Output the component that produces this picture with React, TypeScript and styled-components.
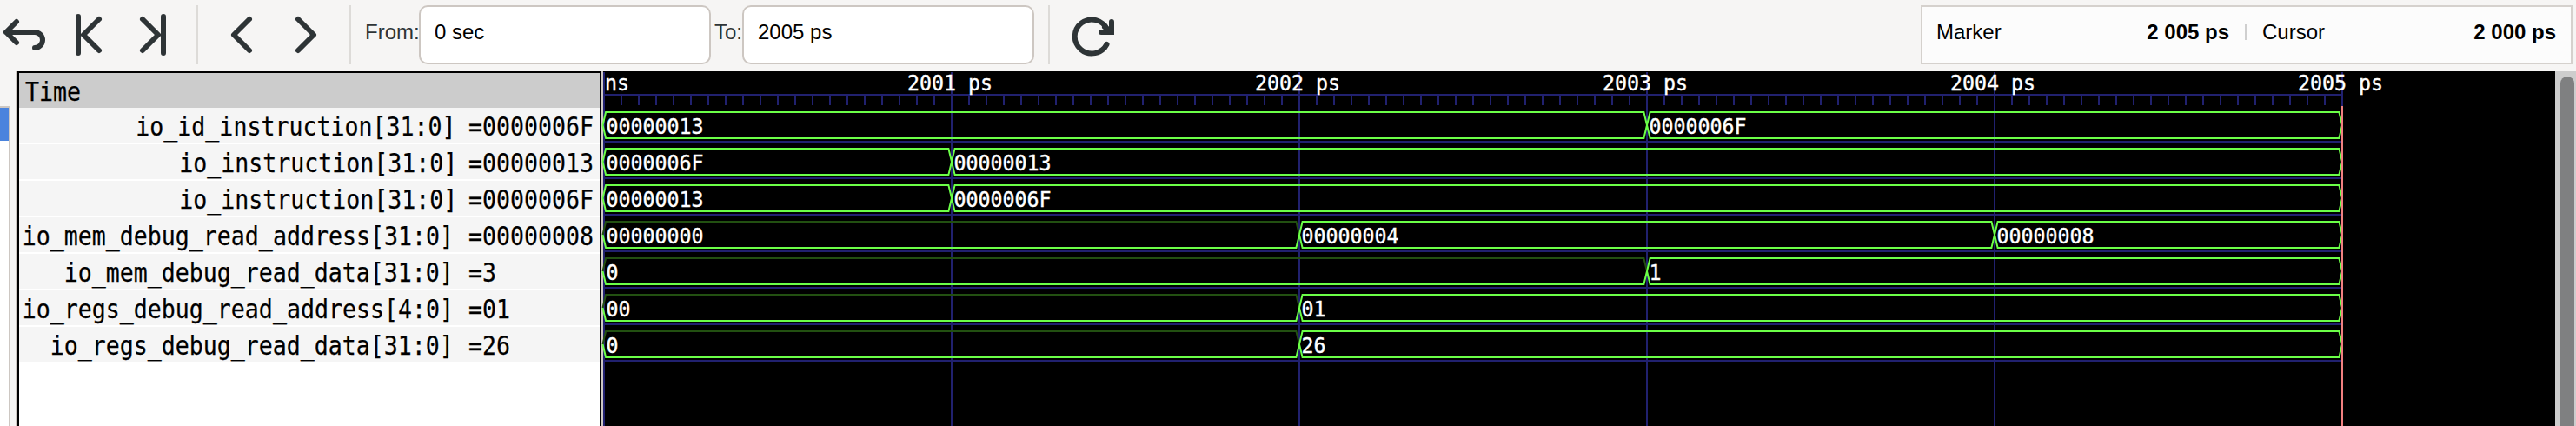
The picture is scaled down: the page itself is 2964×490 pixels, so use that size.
import React from "react";
import styled, { createGlobalStyle } from "styled-components";

const GlobalStyle = createGlobalStyle`
  * { box-sizing: border-box; }
  body { margin: 0; background: #f6f5f4; overflow: hidden; }
`;

const sans = `"Liberation Sans", Arial, sans-serif`;
const mono = `"DejaVu Sans Mono", "Liberation Mono", monospace`;

const Window = styled.div`
  display: flex;
  flex-direction: column;
  width: 2964px;
  height: 490px;
  background: #f6f5f4;
  font-family: ${sans};
  font-size: 24px;
  color: #000;
`;

const Toolbar = styled.header`
  display: flex;
  flex: none;
  height: 82px;
  padding: 6px 4px 8px 0;
`;

const IconButton = styled.button<{ $width: number }>`
  display: flex;
  flex: none;
  width: ${(p) => p.$width}px;
  height: 68px;
  padding: 0;
  border: 0;
  background: none;
`;

const Separator = styled.div`
  flex: none;
  width: 2px;
  height: 68px;
  background: #dddbd8;
`;

const FieldLabel = styled.label<{ $width: number; $indent: number }>`
  flex: none;
  width: ${(p) => p.$width}px;
  padding-left: ${(p) => p.$indent}px;
  line-height: 62px;
  white-space: nowrap;
  color: #2e3436;
`;

const Entry = styled.div`
  flex: none;
  width: 336px;
  height: 68px;
  padding-left: 16px;
  line-height: 58px;
  border: 2px solid #cdc7c2;
  border-radius: 10px;
  background: #fff;
`;

const Gap = styled.div<{ $width: number }>`
  flex: none;
  width: ${(p) => p.$width}px;
`;

const StatusBox = styled.div`
  display: flex;
  width: 750px;
  height: 68px;
  margin-left: auto;
  padding: 0 17px 0 16px;
  line-height: 58px;
  border: 2px solid #d5d1cd;
  background: #fcfcfc;
`;

const StatusItem = styled.div<{ $width: number }>`
  display: flex;
  justify-content: space-between;
  width: ${(p) => p.$width}px;
`;

const StatusDivider = styled.div`
  width: 2px;
  height: 18px;
  margin: 20px 18px 0 18px;
  background: #cfcfcf;
`;

const Main = styled.main`
  display: flex;
  flex: 1;
  min-height: 0;
`;

const TreeEdge = styled.aside`
  flex: none;
  width: 12px;
  margin: 40px 6px 0 0;
  border: solid #cdc7c2;
  border-width: 2px 2px 0 0;
  background: #fff;
`;

const TreeSelection = styled.div`
  height: 38px;
  background: #4a83dd;
`;

const SignalPane = styled.section`
  flex: none;
  width: 676px;
  border: solid #cdc7c2;
  border-width: 0 2px;
  background: #fff;
`;

const SignalFrame = styled.div`
  height: 100%;
  border: solid #000;
  border-width: 2px 2px 0;
  font-family: ${mono};
  font-size: 30px;
`;

const Condensed = styled.span`
  display: inline-block;
  transform: scaleX(0.886);
  transform-origin: 0 50%;
  white-space: pre;
  -webkit-text-stroke: 0.25px #000;
`;

const TimeHeader = styled.div`
  height: 40px;
  padding-left: 7px;
  line-height: 43px;
  background: #ccc;
`;

const SignalRow = styled.div`
  display: flex;
  height: 42px;
  line-height: 43px;
  border-bottom: 2px solid #fff;
  background: #f5f5f5;
`;

const SignalName = styled.div<{ $shift: number }>`
  flex: none;
  width: ${(p) => 502 + p.$shift}px;
  margin-right: ${(p) => 14.5 - p.$shift}px;
  display: flex;
  justify-content: flex-end;
  white-space: pre;

  ${Condensed} {
    flex: none;
    transform-origin: 100% 50%;
  }
`;

const WavePane = styled.section`
  flex: none;
  width: 2246px;
  height: 100%;
  background: #000;
`;

const Scrollbar = styled.div`
  display: flex;
  width: 24px;
  padding: 6px 2px 0 6px;
  background: #cdcdcd;
`;

const Thumb = styled.div`
  flex: 1;
  border-radius: 8px 8px 0 0;
  background: #7f8081;
`;

type IconProps = { x: number; w: number; children: React.ReactNode };

const Icon = ({ x, w, children }: IconProps) => (
  <svg
    width={w}
    height={68}
    viewBox={`${x} 6 ${w} 68`}
    fill="none"
    stroke="#2e3436"
    strokeWidth={6}
    strokeLinecap="round"
    strokeLinejoin="round"
  >
    {children}
  </svg>
);

type Segment = { at: number; value: string; low?: boolean };
type Signal = { name: string; value: string; shift: number; wave: Segment[] };

const signals: Signal[] = [
  {
    name: "io_id_instruction[31:0]",
    value: "0000006F",
    shift: 0,
    wave: [{ at: 0, value: "00000013" }, { at: 3, value: "0000006F" }],
  },
  {
    name: "io_instruction[31:0]",
    value: "00000013",
    shift: 2,
    wave: [{ at: 0, value: "0000006F" }, { at: 1, value: "00000013" }],
  },
  {
    name: "io_instruction[31:0]",
    value: "0000006F",
    shift: 2,
    wave: [{ at: 0, value: "00000013" }, { at: 1, value: "0000006F" }],
  },
  {
    name: "io_mem_debug_read_address[31:0]",
    value: "00000008",
    shift: -2,
    wave: [
      { at: 0, value: "00000000", low: true },
      { at: 2, value: "00000004" },
      { at: 4, value: "00000008" },
    ],
  },
  {
    name: "io_mem_debug_read_data[31:0]",
    value: "3",
    shift: -2,
    wave: [{ at: 0, value: "0", low: true }, { at: 3, value: "1" }],
  },
  {
    name: "io_regs_debug_read_address[4:0]",
    value: "01",
    shift: -2,
    wave: [{ at: 0, value: "00", low: true }, { at: 2, value: "01" }],
  },
  {
    name: "io_regs_debug_read_data[31:0]",
    value: "26",
    shift: -2,
    wave: [{ at: 0, value: "0", low: true }, { at: 2, value: "26" }],
  },
];

const STEP = 400;
const END = 5;
const GRID = "#21216f";
const GREEN = "#6bff47";
const DIM = "#225011";

const WaveText = ({ x, y, children }: { x: number; y: number; children: string }) => (
  <text
    x={x}
    y={y}
    fill="#fff"
    stroke="#fff"
    strokeWidth={0.4}
    fontFamily='"DejaVu Sans Mono", monospace'
    fontSize={25.5}
    textLength={children.length * 14}
    lengthAdjust="spacingAndGlyphs"
  >
    {children}
  </text>
);

const Wave = ({ segments, row }: { segments: Segment[]; row: number }) => {
  const top = 47 + row * 42;
  const mid = top + 15;
  const bottom = top + 30;
  return (
    <g fill="none" strokeWidth={2}>
      {segments.map((s, i) => {
        const last = i === segments.length - 1;
        const x0 = s.at * STEP + (s.at ? 1 : -0.5);
        const x1 = (last ? END : segments[i + 1].at) * STEP + 1;
        const half = (y: number) =>
          `M${x0} ${mid}L${x0 + 3.6} ${y}H${x1 - 3.6}L${x1} ${mid}`;
        return (
          <g key={s.at}>
            <path d={half(top)} stroke={s.low ? DIM : GREEN} />
            <path d={half(bottom)} stroke={GREEN} />
            <WaveText x={s.at * STEP + 3.5} y={top + 24.5}>
              {s.value}
            </WaveText>
          </g>
        );
      })}
    </g>
  );
};

const WaveCanvas = styled.svg`
  display: block;
  overflow: visible;
`;

const Waveforms = () => (
  <WaveCanvas width={2246} height={408}>
    <g fill={GRID}>
      <rect x={0} y={26} width={2000} height={2} />
      {Array.from({ length: 101 }, (_, i) => (
        <rect
          key={i}
          x={i * 20}
          y={i % 20 ? 28 : 1}
          width={2}
          height={i % 20 ? 11 : 407}
        />
      ))}
      {signals.map((_, i) => (
        <rect key={i} x={0} y={80 + i * 42} width={2000} height={2} />
      ))}
    </g>
    {signals.map((s, i) => (
      <Wave key={i} segments={s.wave} row={i} />
    ))}
    <WaveText x={2} y={22}>ns</WaveText>
    {[1, 2, 3, 4, 5].map((n) => (
      <WaveText key={n} x={n * STEP - 50} y={22}>
        {`200${n} ps`}
      </WaveText>
    ))}
    <rect x={2000} y={40} width={2} height={368} fill="#f08080" />
  </WaveCanvas>
);

export default function App() {
  return (
    <Window>
      <GlobalStyle />
      <Toolbar>
        <IconButton $width={70}>
          <Icon x={0} w={70}>
            <path d="M19 25L7 37L19 49M7 37H40A9 9 0 0 1 40 55" />
          </Icon>
        </IconButton>
        <IconButton $width={70}>
          <Icon x={70} w={70}>
            <path d="M90 19V61M114 22L96 40L114 58" />
          </Icon>
        </IconButton>
        <IconButton $width={86}>
          <Icon x={140} w={86}>
            <path d="M188 19V61M164 22L182 40L164 58" />
          </Icon>
        </IconButton>
        <Separator />
        <IconButton $width={88}>
          <Icon x={228} w={88}>
            <path d="M287 22L269 40L287 58" />
          </Icon>
        </IconButton>
        <IconButton $width={86}>
          <Icon x={316} w={86}>
            <path d="M343 22L361 40L343 58" />
          </Icon>
        </IconButton>
        <Separator />
        <FieldLabel $width={78} $indent={16}>From:</FieldLabel>
        <Entry>0 sec</Entry>
        <FieldLabel $width={36} $indent={4}>To:</FieldLabel>
        <Entry>2005 ps</Entry>
        <Gap $width={16} />
        <Separator />
        <IconButton $width={96}>
          <Icon x={1208} w={96}>
            <path d="M1273.5 51A19.5 19.5 0 1 1 1274 34" />
            <path d="M1279 25V37H1267" strokeLinejoin="miter" />
            <path d="M1271 31L1278 36" />
          </Icon>
        </IconButton>
        <StatusBox>
          <StatusItem $width={337}>
            <span>Marker</span>
            <b>2 005 ps</b>
          </StatusItem>
          <StatusDivider />
          <StatusItem $width={338}>
            <span>Cursor</span>
            <b>2 000 ps</b>
          </StatusItem>
        </StatusBox>
      </Toolbar>
      <Main>
        <TreeEdge>
          <TreeSelection />
        </TreeEdge>
        <SignalPane>
          <SignalFrame>
            <TimeHeader>
              <Condensed>Time</Condensed>
            </TimeHeader>
            {signals.map((s, i) => (
              <SignalRow key={i}>
                <SignalName $shift={s.shift}>
                  <Condensed>{s.name}</Condensed>
                </SignalName>
                <Condensed>{`=${s.value}`}</Condensed>
              </SignalRow>
            ))}
          </SignalFrame>
        </SignalPane>
        <WavePane>
          <Waveforms />
        </WavePane>
        <Scrollbar>
          <Thumb />
        </Scrollbar>
      </Main>
    </Window>
  );
}
